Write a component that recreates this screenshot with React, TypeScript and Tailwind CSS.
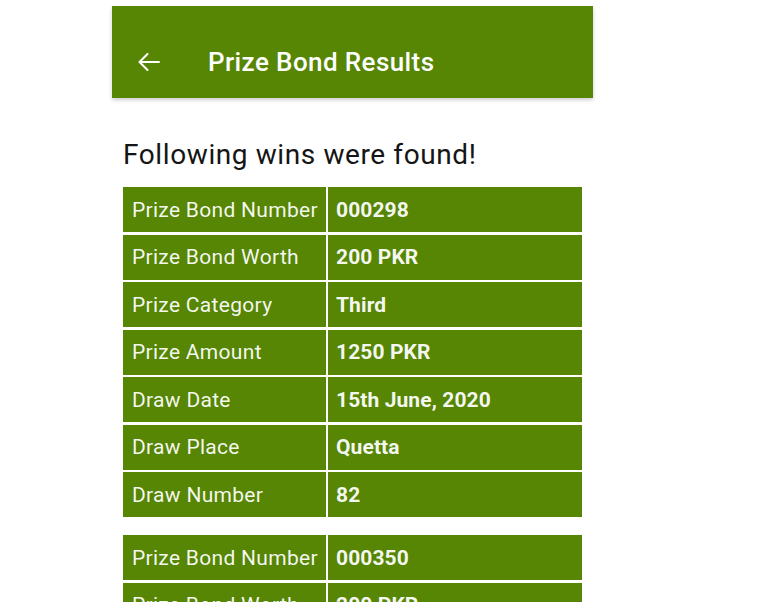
const rows1 = [
  ['Prize Bond Number', '000298'],
  ['Prize Bond Worth', '200 PKR'],
  ['Prize Category', 'Third'],
  ['Prize Amount', '1250 PKR'],
  ['Draw Date', '15th June, 2020'],
  ['Draw Place', 'Quetta'],
  ['Draw Number', '82'],
];

const rows2 = [
  ['Prize Bond Number', '000350'],
  ['Prize Bond Worth', '200 PKR'],
  ['Prize Category', 'Third'],
];

const ResultTable = ({ rows }: { rows: string[][] }) => (
  <div className="grid grid-cols-[203px_254px] gap-x-[2px] gap-y-[2.5px]">
    {rows.map(([label, value]) => (
      <div key={label} className="contents">
        <div className="h-[45px] bg-[#568604] flex items-center pl-[9px] pt-[2px] text-[21px] tracking-[0.3px] text-white/95">
          {label}
        </div>
        <div className="h-[45px] bg-[#568604] flex items-center pl-[8px] pt-[2px] text-[21px] tracking-[0.1px] font-bold text-white/95">
          {value}
        </div>
      </div>
    ))}
  </div>
);

export default function App() {
  return (
    <div className="w-[773px] h-[602px] overflow-hidden bg-white" style={{ fontFamily: 'Roboto, "Liberation Sans", sans-serif' }}>
      <div className="ml-[112px] w-[481px] pt-[6px]">
        <div className="h-[92px] bg-[#568604] flex items-center pl-[26px] pt-[20px] shadow-[0_2px_4px_rgba(0,0,0,0.2)]">
          <svg width="22" height="18" viewBox="0 0 22 18" fill="none" stroke="white" strokeWidth="2" strokeLinecap="round" strokeLinejoin="round">
            <path d="M21 9H1.5M9.5 1 1.5 9l8 8" />
          </svg>
          <h1 className="ml-[48px] text-[26px] tracking-[0.4px] font-medium text-white">Prize Bond Results</h1>
        </div>
        <div className="pl-[11px]">
          <p className="mt-[41px] text-[28px] leading-[32px] tracking-[0.6px] text-[#151515]">Following wins were found!</p>
          <div className="mt-[16px]">
            <ResultTable rows={rows1} />
          </div>
          <div className="mt-[18px]">
            <ResultTable rows={rows2} />
          </div>
        </div>
      </div>
    </div>
  );
}
